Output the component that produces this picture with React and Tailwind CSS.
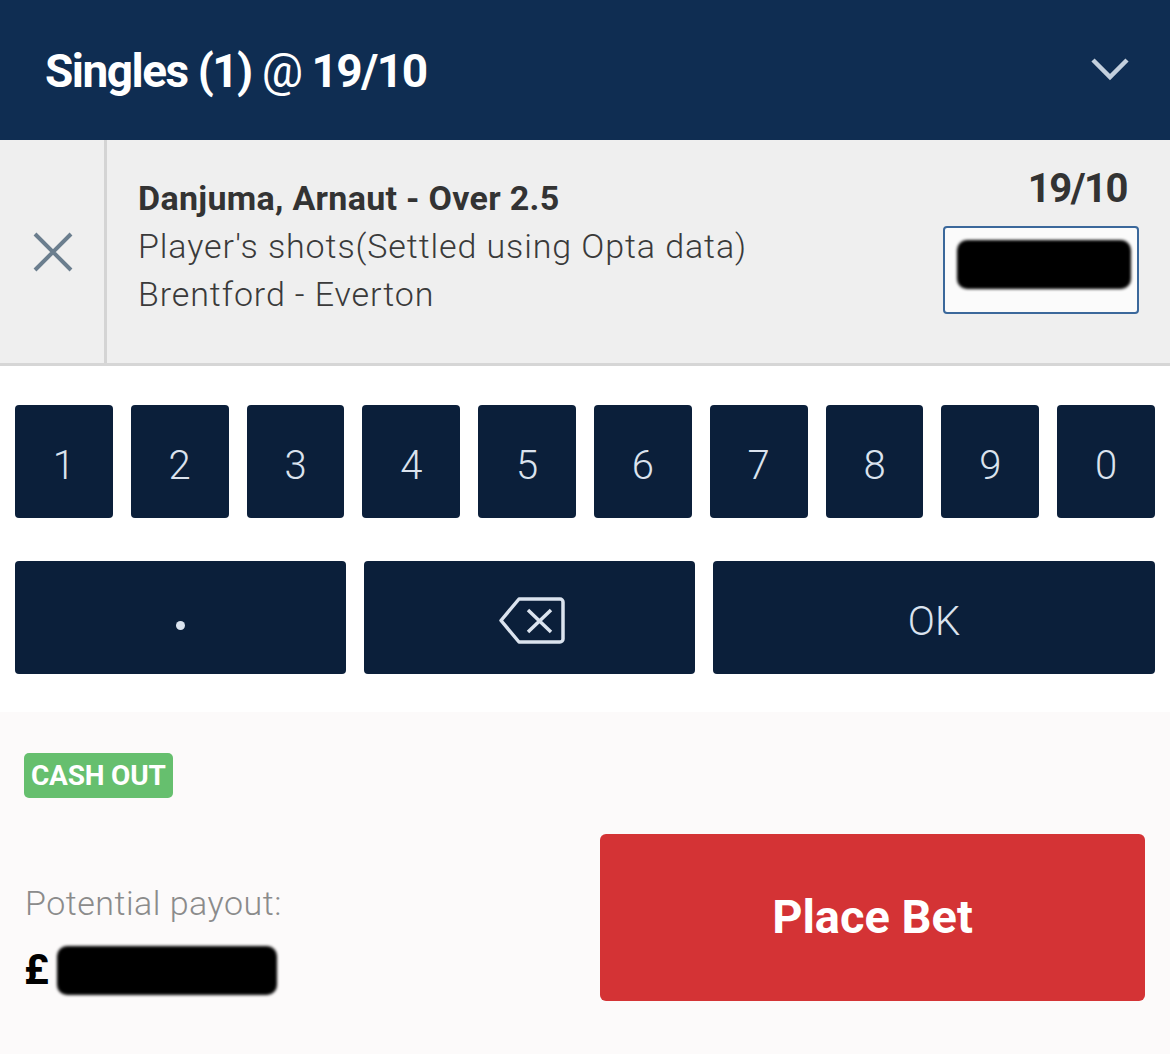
import React from "react";

const keys = ["1", "2", "3", "4", "5", "6", "7", "8", "9", "0"];

function Key({ children, className = "" }) {
  return (
    <div
      className={
        "h-[113px] rounded-[4px] bg-[#0b1f3a] flex items-center justify-center text-[#dbe3ee] text-[40px] font-light " +
        className
      }
    >
      {children}
    </div>
  );
}

export default function App() {
  return (
    <div className="w-[1170px] h-[1054px] flex flex-col bg-[#fcfafa] font-['Roboto',_'Noto_Sans',_sans-serif] overflow-hidden">
      {/* Header */}
      <div className="h-[140px] shrink-0 bg-[#0f2d52] flex items-center justify-between pl-[45px] pr-[40px]">
        <div className="text-white text-[46px] leading-none tracking-[-1.5px] pt-[1px]">
          <span className="font-bold">Singles (1)</span>
          <span className="font-normal"> @ </span>
          <span className="font-bold">19/10</span>
        </div>
        <svg width="40" height="26" viewBox="0 0 40 26" className="mt-[-2px]">
          <path d="M3 4 L20 21 L37 4" fill="none" stroke="#c3cfdd" strokeWidth="4.5" />
        </svg>
      </div>

      {/* Bet row */}
      <div className="h-[226px] shrink-0 bg-[#efefef] border-b-[3px] border-[#d6d6d6] flex">
        <div className="w-[107px] shrink-0 border-r-[3px] border-[#d4d4d4] flex items-center justify-center">
          <svg width="40" height="40" viewBox="0 0 40 40" className="ml-[1px]">
            <path d="M2 2 L38 38 M38 2 L2 38" stroke="#6b7e8e" strokeWidth="4" fill="none" />
          </svg>
        </div>
        <div className="flex-1 pl-[31px] pt-[34px] text-[#333] text-[34px] leading-[48px]">
          <div className="font-bold tracking-[0.3px]">Danjuma, Arnaut - Over 2.5</div>
          <div className="font-light text-[#3a3a3a] tracking-[0.9px]">Player's shots(Settled using Opta data)</div>
          <div className="font-light text-[#3a3a3a] tracking-[0.9px]">Brentford - Everton</div>
        </div>
        <div className="flex flex-col items-end pr-[31px] pt-[25px]">
          <div className="font-bold text-[#333] text-[40px] leading-[48px] mr-[12px] tracking-[-1.5px]">19/10</div>
          <div className="mt-[13px] w-[196px] h-[88px] rounded-[4px] border-2 border-[#3b689b] bg-[#fbfbfb] pt-[12px] pl-[12px]">
            <div className="w-[174px] h-[49px] bg-black rounded-[10px] blur-[1.5px]" />
          </div>
        </div>
      </div>

      {/* Keypad */}
      <div className="h-[346px] shrink-0 bg-white px-[15px] pt-[39px] flex flex-col gap-[43px]">
        <div className="grid grid-cols-10 gap-x-[18px]">
          {keys.map((k) => (
            <Key key={k}>
              <span className="mt-[8px]">{k}</span>
            </Key>
          ))}
        </div>
        <div className="flex gap-[18px]">
          <Key className="w-[331px]">
            <div className="w-[9px] h-[9px] rounded-full bg-[#dbe3ee] mt-[16px]" />
          </Key>
          <Key className="w-[331px]">
            <svg width="68" height="49" viewBox="0 0 68 49" className="ml-[4px] mt-[6px]">
              <path
                d="M3 24.5 L21 3 H62 a3 3 0 0 1 3 3 V43 a3 3 0 0 1 -3 3 H21 Z"
                fill="none"
                stroke="#dbe3ee"
                strokeWidth="3.5"
                strokeLinejoin="round"
              />
              <path d="M30 14 L53 36 M53 14 L30 36" stroke="#dbe3ee" strokeWidth="3.5" fill="none" />
            </svg>
          </Key>
          <Key className="flex-1">
            <span className="mt-[8px]">OK</span>
          </Key>
        </div>
      </div>

      {/* Bottom */}
      <div className="flex-1 bg-[#fcfafa] pl-[24px] pr-[25px] pt-[41px] flex flex-col">
        <div className="self-start h-[45px] px-[7px] rounded-[5px] bg-[#66bf6e] text-white font-bold text-[28px] flex items-center tracking-[-0.2px]">
          CASH OUT
        </div>
        <div className="flex mt-[36px]">
          <div className="flex-1 pt-[49px]">
            <div className="text-[#8b8b8b] text-[34px] leading-[40px] font-light pl-[1px] tracking-[0.5px]">Potential payout:</div>
            <div className="mt-[22px] flex items-center h-[50px]">
              <span className="text-black font-bold text-[42px] leading-none">£</span>
              <div className="w-[220px] h-[49px] bg-black rounded-[10px] blur-[1.5px] ml-[8px]" />
            </div>
          </div>
          <div className="w-[545px] h-[167px] rounded-[6px] bg-[#d43335] flex items-center justify-center text-white font-bold text-[47px]">
            Place Bet
          </div>
        </div>
      </div>
    </div>
  );
}
